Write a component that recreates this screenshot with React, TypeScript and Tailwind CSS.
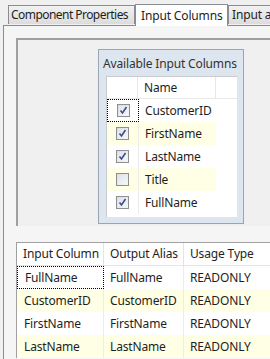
import React from "react";

const Check = ({ on }: { on: boolean }) => (
  <div className="w-[13px] h-[13px] border border-[#8e8f8f] bg-gradient-to-br from-[#dcdcdc] to-[#f6f6f6] flex items-center justify-center">
    <div className="w-[9px] h-[9px] bg-gradient-to-br from-[#e0e4ea] to-[#f4f6f9] flex items-center justify-center">
      {on && (
        <svg width="9" height="9" viewBox="0 0 9 9">
          <path d="M1.5 4.5 L3.5 7 L7.5 1" fill="none" stroke="#3e4e8a" strokeWidth="1.6" />
        </svg>
      )}
    </div>
  </div>
);

const avail = [
  { n: "CustomerID", on: true },
  { n: "FirstName", on: true },
  { n: "LastName", on: true },
  { n: "Title", on: false },
  { n: "FullName", on: true },
];

const rows = [
  ["FullName", "FullName", "READONLY"],
  ["CustomerID", "CustomerID", "READONLY"],
  ["FirstName", "FirstName", "READONLY"],
  ["LastName", "LastName", "READONLY"],
];

export default function App() {
  return (
    <div
      className="w-[270px] h-[359px] overflow-hidden bg-[#f0f0f0] text-[12px] tracking-[-0.15px] text-[#1e1e1e] leading-none whitespace-nowrap"
      style={{ fontFamily: '"Noto Sans", "Open Sans", sans-serif' }}
    >
      {/* tabs */}
      <div className="flex items-end h-[25px] pl-[8px]">
        <div className="h-[19px] w-[127px] border border-b-0 border-[#898c95] bg-gradient-to-b from-[#f2f2f2] to-[#dcdcdc] flex items-center pl-[2px] mb-[1px] tracking-[-0.55px] overflow-hidden">
          Component Properties
        </div>
        <div className="h-[22px] w-[93px] border border-b-0 border-[#898c95] bg-white flex items-center pl-[5px] -mb-[1px] relative z-10">
          Input Columns
        </div>
        <div className="h-[19px] flex-1 border border-b-0 border-r-0 border-[#898c95] bg-gradient-to-b from-[#f2f2f2] to-[#dcdcdc] flex items-center pl-[3px] mb-[1px] overflow-hidden">
          Input a
        </div>
      </div>
      {/* panel */}
      <div className="ml-[3px] border-l border-t border-[#898c95] bg-[#f5f5f5] h-[334px] pl-[12px] pt-[12px]">
        {/* top frame */}
        <div className="h-[188px] border-l-2 border-t-2 border-l-[#a0a0a0] border-t-[#a0a0a0] bg-[#f0f0f0] pl-[80px] pt-[9px]">
          <div className="w-[146px] h-[175px] border border-[#9aa5b3] bg-[#dde5ee] flex flex-col">
            <div className="h-[26px] pl-[4px] pt-[2px] flex items-center text-[#333]">Available Input Columns</div>
            <div className="ml-[7px] w-[131px] h-[141px] bg-white border-l border-t border-[#c8ccd2]">
              <div className="flex h-[22px] border-b border-[#e8e8e8]">
                <div className="w-[31px] border-r border-[#e6e6e6]" />
                <div className="w-[78px] flex items-center pl-[6px] border-r border-[#e6e6e6]">Name</div>
              </div>
              {avail.map((a, i) => (
                <div key={a.n} className={`flex h-[23px] w-[109px] ${i % 2 === 1 ? "bg-[#ffffe6]" : "bg-white"}`}>
                  <div className={`w-[32px] flex items-center justify-center border-r border-[#ececec] ${i === 0 ? "border border-dotted border-black" : ""}`}>
                    <Check on={a.on} />
                  </div>
                  <div className="flex-1 flex items-center pl-[6px]">{a.n}</div>
                </div>
              ))}
            </div>
          </div>
        </div>
        {/* bottom grid */}
        <div className="mt-[16px] border-l border-t border-[#a0a0a0] bg-white">
          <div className="flex h-[23px] border-b border-[#e4e4e4]">
            <div className="w-[87px] flex items-center pl-[6px] border-r border-[#e4e4e4]">Input Column</div>
            <div className="w-[80px] flex items-center pl-[6px] border-r border-[#e4e4e4]">Output Alias</div>
            <div className="flex-1 flex items-center pl-[6px]">Usage Type</div>
          </div>
          {rows.map((r, i) => (
            <div key={r[0]} className={`flex h-[23px] ${i % 2 === 1 ? "bg-[#ffffe6]" : "bg-white"}`}>
              <div className={`w-[87px] flex items-center pl-[7px] ${i === 0 ? "border border-dotted border-black" : "border-r border-[#ececec]"}`}>{r[0]}</div>
              <div className="w-[80px] flex items-center pl-[6px] border-r border-[#ececec]">{r[1]}</div>
              <div className="flex-1 flex items-center pl-[6px]">{r[2]}</div>
            </div>
          ))}
        </div>
      </div>
    </div>
  );
}
